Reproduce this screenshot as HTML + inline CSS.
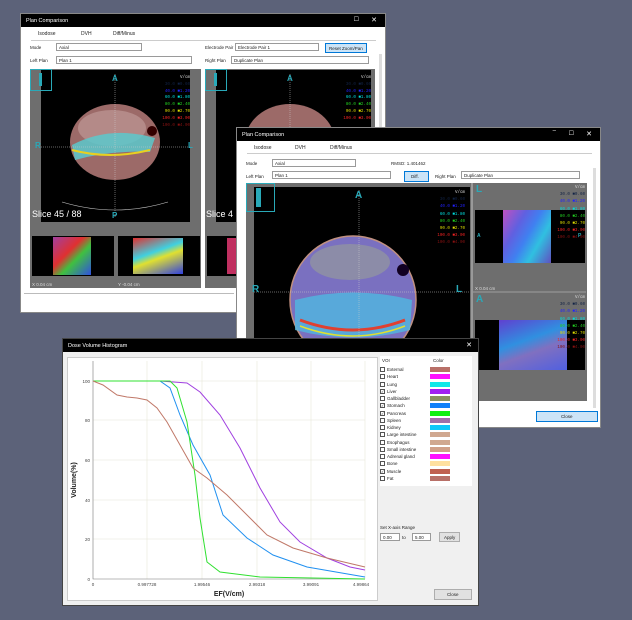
<!DOCTYPE html>
<html><head><meta charset="utf-8"><style>
*{margin:0;padding:0;box-sizing:border-box}
body{width:632px;height:620px;background:#5c6279;position:relative;overflow:hidden;font-family:"Liberation Sans",sans-serif;font-size:5px;color:#222}
.a{position:absolute}
.win{position:absolute;background:#fff;border:1px solid #888}
.tb{position:absolute;left:0;right:0;top:0;height:13px;background:#000;color:#fff;font-size:5.5px;padding:4px 0 0 5px}
.inp{position:absolute;background:#fff;border:1px solid #9a9a9a;height:8px;font-size:4.5px;padding:1px 2px}
.gray{position:absolute;background:#6e6e6e}
.blk{position:absolute;background:#000}
.lab{position:absolute;font-size:4.5px}
.cy{color:#29a9b8;position:absolute;font-weight:bold}
</style></head><body>

<!-- Window 1 -->
<div class="win" style="left:20px;top:13px;width:366px;height:300px">
 <div class="tb">Plan Comparison<span class="a" style="right:8px;top:2px;font-size:7px">✕</span><span class="a" style="right:26px;top:2px;font-size:6px">☐</span></div>
 <div class="lab" style="left:17px;top:17px;font-size:5px">Isodose</div>
 <div class="lab" style="left:60px;top:17px;font-size:5px">DVH</div>
 <div class="lab" style="left:92px;top:17px;font-size:5px">Diff/Minus</div>
 <div class="a" style="left:10px;top:26px;width:345px;height:1px;background:#ccc"></div>
 <div class="lab" style="left:9px;top:31px">Mode</div><div class="inp" style="left:35px;top:29px;width:86px">Axial</div>
 <div class="lab" style="left:9px;top:44px">Left Plan</div><div class="inp" style="left:35px;top:42px;width:136px">Plan 1</div>
 <div class="lab" style="left:184px;top:31px">Electrode Pair</div><div class="inp" style="left:214px;top:29px;width:84px">Electrode Pair 1</div>
 <div class="a" style="left:304px;top:29px;width:42px;height:10px;background:#cce4f7;border:1px solid #0078d7;font-size:4.5px;padding:2px 3px">Reset Zoom/Pan</div>
 <div class="lab" style="left:184px;top:44px">Right Plan</div><div class="inp" style="left:210px;top:42px;width:138px">Duplicate Plan</div>
 <div class="a" style="left:358px;top:40px;width:3px;height:250px;background:#ddd"></div>
</div>
<div class="gray" style="left:30px;top:69px;width:171px;height:219px"></div>
<div class="blk" style="left:41px;top:70px;width:149px;height:152px"></div>
<div class="gray" style="left:205px;top:69px;width:170px;height:219px"></div>
<div class="blk" style="left:216px;top:70px;width:155px;height:152px"></div>
<svg class="a" style="left:0;top:0" width="632" height="620">
 <g>
 <ellipse cx="115" cy="142" rx="45" ry="38" fill="#9c6a68"/>
 <ellipse cx="112" cy="128" rx="34" ry="18" fill="#b48a88"/>
 <path d="M72 145 Q110 125 155 138 L150 152 Q110 150 75 160Z" fill="#5cc8cc" opacity=".85"/>
 <path d="M72 150 Q110 160 150 150" stroke="#e8d020" stroke-width="2" fill="none"/>
 <circle cx="152" cy="131" r="5" fill="#300"/>
 <line x1="115" y1="74" x2="115" y2="218" stroke="#ccc" stroke-width=".5" stroke-dasharray="1 1"/>
 <line x1="41" y1="147" x2="190" y2="147" stroke="#ccc" stroke-width=".5" stroke-dasharray="1 1"/>
 <path d="M62 202 Q115 218 168 202" stroke="#ccc" stroke-width=".6" fill="none"/>
 <ellipse cx="290" cy="142" rx="45" ry="38" fill="#9c6a68"/>
 <line x1="290" y1="74" x2="290" y2="130" stroke="#ccc" stroke-width=".5" stroke-dasharray="1 1"/>
 </g>
</svg>
<div class="cy" style="left:112px;top:74px;font-size:8px">A</div>
<div class="cy" style="left:287px;top:74px;font-size:8px">A</div>
<div class="cy" style="left:35px;top:141px;font-size:8px">R</div>
<div class="cy" style="left:188px;top:141px;font-size:8px">L</div>
<div class="cy" style="left:112px;top:211px;font-size:8px">P</div>
<div class="a" style="left:30px;top:69px;width:22px;height:22px;border:1px solid #29a9b8"></div>
<div class="a" style="left:39px;top:73px;width:3px;height:13px;background:#29a9b8"></div>
<div class="a" style="left:205px;top:69px;width:22px;height:22px;border:1px solid #29a9b8"></div>
<div class="a" style="left:214px;top:73px;width:3px;height:13px;background:#29a9b8"></div>
<div class="a" style="left:32px;top:209px;color:#fff;font-size:9px">Slice 45 / 88</div>
<div class="a" style="left:206px;top:209px;color:#fff;font-size:9px">Slice 4</div>
<div class="a" style="left:155px;top:75px;font-family:'Liberation Mono';font-size:4.2px;line-height:6.8px;text-align:right;width:35px">
<span style="color:#ddd">V/cm</span><br><span style="color:#124">30.0 ■0.60</span><br><span style="color:#22f">40.0 ■1.20</span><br><span style="color:#0dd">60.0 ■1.80</span><br><span style="color:#2c2">80.0 ■2.40</span><br><span style="color:#dd0">90.0 ■2.70</span><br><span style="color:#e22">100.0 ■3.00</span><br><span style="color:#811">100.0 ■4.00</span></div>
<div class="a" style="left:336px;top:75px;font-family:'Liberation Mono';font-size:4.2px;line-height:6.8px;text-align:right;width:35px">
<span style="color:#ddd">V/cm</span><br><span style="color:#124">30.0 ■0.60</span><br><span style="color:#22f">40.0 ■1.20</span><br><span style="color:#0dd">60.0 ■1.80</span><br><span style="color:#2c2">80.0 ■2.40</span><br><span style="color:#dd0">90.0 ■2.70</span><br><span style="color:#e22">100.0 ■3.00</span></div>
<!-- thumbnails win1 -->
<div class="blk" style="left:32px;top:236px;width:82px;height:40px"></div>
<div class="a" style="left:53px;top:237px;width:38px;height:38px;background:linear-gradient(135deg,#a040a0,#e03030 40%,#40c040 60%,#3050e0)"></div>
<div class="blk" style="left:118px;top:236px;width:82px;height:40px"></div>
<div class="a" style="left:133px;top:238px;width:50px;height:36px;background:linear-gradient(160deg,#e03030,#40d0e0 40%,#e0e030 55%,#3040e0)"></div>
<div class="blk" style="left:207px;top:236px;width:30px;height:40px"></div>
<div class="a" style="left:227px;top:238px;width:10px;height:36px;background:#c03060"></div>
<div class="a" style="left:32px;top:282px;color:#ddd;font-size:4.5px">X 0.04 cm</div>
<div class="a" style="left:118px;top:282px;color:#ddd;font-size:4.5px">Y -0.04 cm</div>
<div class="a" style="left:24px;top:293px;width:210px;height:1px;background:#bbb"></div>

<!-- Window 2 -->
<div class="win" style="left:236px;top:127px;width:365px;height:301px">
 <div class="tb">Plan Comparison<span class="a" style="right:8px;top:2px;font-size:7px">✕</span><span class="a" style="right:26px;top:2px;font-size:6px">☐</span><span class="a" style="right:44px;top:0;font-size:6px">–</span></div>
 <div class="lab" style="left:17px;top:17px;font-size:5px">Isodose</div>
 <div class="lab" style="left:58px;top:17px;font-size:5px">DVH</div>
 <div class="lab" style="left:93px;top:17px;font-size:5px">Diff/Minus</div>
 <div class="a" style="left:10px;top:25px;width:345px;height:1px;background:#ccc"></div>
 <div class="lab" style="left:9px;top:33px">Mode</div><div class="inp" style="left:35px;top:31px;width:84px">Axial</div>
 <div class="lab" style="left:9px;top:46px">Left Plan</div><div class="inp" style="left:35px;top:43px;width:119px">Plan 1</div>
 <div class="lab" style="left:154px;top:33px">RMSD: 1.401462</div>
 <div class="a" style="left:167px;top:43px;width:25px;height:11px;background:#cce4f7;border:1px solid #0078d7;font-size:4.5px;padding:2px 6px">Diff.</div>
 <div class="lab" style="left:198px;top:46px">Right Plan</div><div class="inp" style="left:224px;top:43px;width:119px">Duplicate Plan</div>
 <div class="a" style="left:299px;top:283px;width:62px;height:11px;background:#cce4f7;border:1px solid #0078d7;font-size:4.5px;padding:2px 24px">Close</div>
 <div class="a" style="left:356px;top:40px;width:3px;height:240px;background:#ddd"></div>
</div>
<div class="gray" style="left:246px;top:183px;width:341px;height:218px"></div>
<div class="blk" style="left:254px;top:187px;width:216px;height:214px"></div>
<div class="gray" style="left:471px;top:183px;width:2px;height:218px;background:#999"></div>
<div class="blk" style="left:475px;top:210px;width:110px;height:53px"></div>
<div class="a" style="left:503px;top:210px;width:48px;height:53px;background:linear-gradient(120deg,#c050c0,#6060e0 30%,#4080f0 50%,#30c0e0 70%,#6050c0)"></div>
<div class="blk" style="left:475px;top:320px;width:110px;height:50px"></div>
<div class="a" style="left:499px;top:320px;width:68px;height:50px;background:linear-gradient(160deg,#6040d0,#3090e0 40%,#8070c0 60%,#5060e0)"></div>
<svg class="a" style="left:0;top:0" width="632" height="620">
 <ellipse cx="353" cy="300" rx="63" ry="64" fill="#7a70c0" stroke="#c09080" stroke-width="1.5"/>
 <ellipse cx="350" cy="262" rx="40" ry="18" fill="#8c8ca8"/>
 <path d="M295 300 Q353 285 412 300 L410 330 Q353 345 295 330Z" fill="#50b8e0" opacity=".8"/>
 <path d="M300 320 Q353 340 405 320" stroke="#e04030" stroke-width="3" fill="none"/>
 <path d="M300 326 Q353 346 405 326" stroke="#e0e030" stroke-width="1.5" fill="none"/>
 <circle cx="403" cy="270" r="6" fill="#102"/>
 <line x1="359" y1="190" x2="359" y2="400" stroke="#ccc" stroke-width=".5" stroke-dasharray="1 1"/>
 <line x1="254" y1="292" x2="470" y2="292" stroke="#ccc" stroke-width=".5" stroke-dasharray="1 1"/>
 <line x1="473" y1="292" x2="586" y2="292" stroke="#ccc" stroke-width=".6"/>
</svg>
<div class="cy" style="left:355px;top:190px;font-size:10px">A</div>
<div class="cy" style="left:252px;top:284px;font-size:10px">R</div>
<div class="cy" style="left:456px;top:284px;font-size:10px">L</div>
<div class="a" style="left:246px;top:183px;width:29px;height:29px;border:1px solid #29a9b8"></div>
<div class="a" style="left:256px;top:188px;width:5px;height:19px;background:#29a9b8"></div>
<div class="cy" style="left:476px;top:184px;font-size:10px">L</div>
<div class="cy" style="left:476px;top:294px;font-size:10px">A</div>
<div class="cy" style="left:477px;top:233px;font-size:5px">A</div>
<div class="cy" style="left:578px;top:233px;font-size:5px">P</div>
<div class="a" style="left:475px;top:286px;color:#ddd;font-size:4.5px">X 0.04 cm</div>
<div class="a" style="left:425px;top:190px;font-family:'Liberation Mono';font-size:4.2px;line-height:7.2px;text-align:right;width:40px">
<span style="color:#ddd">V/cm</span><br><span style="color:#124">30.0 ■0.60</span><br><span style="color:#22f">40.0 ■1.20</span><br><span style="color:#0dd">60.0 ■1.80</span><br><span style="color:#2c2">80.0 ■2.40</span><br><span style="color:#dd0">90.0 ■2.70</span><br><span style="color:#e22">100.0 ■3.00</span><br><span style="color:#811">100.0 ■4.00</span></div>
<div class="a" style="left:545px;top:185px;font-family:'Liberation Mono';font-size:4.2px;line-height:7.2px;text-align:right;width:40px">
<span style="color:#ddd">V/cm</span><br><span style="color:#124">30.0 ■0.60</span><br><span style="color:#22f">40.0 ■1.20</span><br><span style="color:#0dd">60.0 ■1.80</span><br><span style="color:#2c2">80.0 ■2.40</span><br><span style="color:#dd0">90.0 ■2.70</span><br><span style="color:#e22">100.0 ■3.00</span><br><span style="color:#811">100.0 ■4.00</span></div>
<div class="a" style="left:545px;top:295px;font-family:'Liberation Mono';font-size:4.2px;line-height:7.2px;text-align:right;width:40px">
<span style="color:#ddd">V/cm</span><br><span style="color:#124">30.0 ■0.60</span><br><span style="color:#22f">40.0 ■1.20</span><br><span style="color:#0dd">60.0 ■1.80</span><br><span style="color:#2c2">80.0 ■2.40</span><br><span style="color:#dd0">90.0 ■2.70</span><br><span style="color:#e22">100.0 ■3.00</span><br><span style="color:#811">100.0 ■4.00</span></div>

<!-- DVH window -->
<div class="win" style="left:62px;top:338px;width:417px;height:268px;background:#f0f0f0;border-color:#444">
 <div class="tb">Dose Volume Histogram<span class="a" style="right:6px;top:2px;font-size:7px">✕</span></div>
</div>
<div class="a" style="left:67px;top:357px;width:311px;height:244px;background:#fff;border:1px solid #ccc"></div>
<svg class="a" style="left:0;top:0" width="632" height="620" font-family="Liberation Sans">
 <g stroke="#e6e6d8" stroke-width=".6">
  <line x1="93" y1="381" x2="365" y2="381"/><line x1="93" y1="420" x2="365" y2="420"/><line x1="93" y1="460" x2="365" y2="460"/><line x1="93" y1="500" x2="365" y2="500"/><line x1="93" y1="539" x2="365" y2="539"/>
  <line x1="147" y1="361" x2="147" y2="579"/><line x1="202" y1="361" x2="202" y2="579"/><line x1="257" y1="361" x2="257" y2="579"/><line x1="311" y1="361" x2="311" y2="579"/><line x1="365" y1="361" x2="365" y2="579"/>
 </g>
 <path d="M93 361 V579 H365" stroke="#777" stroke-width=".6" fill="none"/>
 <g font-size="4.5" fill="#444" text-anchor="end">
  <text x="90" y="383">100</text><text x="90" y="422">80</text><text x="90" y="462">60</text><text x="90" y="502">40</text><text x="90" y="541">20</text><text x="90" y="581">0</text>
 </g>
 <g font-size="4.5" fill="#444" text-anchor="middle">
  <text x="93" y="586">0</text><text x="147" y="586">0.997728</text><text x="202" y="586">1.99546</text><text x="257" y="586">2.99318</text><text x="311" y="586">3.99091</text><text x="361" y="586">4.99864</text>
 </g>
 <text x="229" y="596" font-size="7" font-weight="bold" text-anchor="middle" fill="#222">EF(V/cm)</text>
 <text transform="translate(76 480) rotate(-90)" font-size="7" font-weight="bold" text-anchor="middle" fill="#222">Volume(%)</text>
 <g fill="none" stroke-width="1">
 <polyline stroke="#a040e0" points="93,381 160,381 187,383 200,392 220,415 240,448 260,488 280,522 300,542 327,558 350,567 365,570"/>
 <polyline stroke="#2090f0" points="93,381 160,381 170,388 180,415 193,445 210,475 223,515 247,538 273,555 307,567 365,577"/>
 <polyline stroke="#30e030" points="93,381 170,381 177,388 187,422 195,475 200,518 207,562 220,572 260,577 365,579"/>
 <polyline stroke="#c07868" points="93,381 103,385 117,395 127,397 137,398 147,400 157,408 167,422 180,445 193,468 207,478 227,495 247,515 267,535 293,548 327,558 365,567"/>
 </g>
</svg>
<!-- table -->
<div class="a" style="left:380px;top:356px;width:92px;height:130px;background:#fff"></div>
<div class="a" style="left:382px;top:358px;font-size:4.5px">VOI</div>
<div class="a" style="left:433px;top:358px;font-size:4.5px">Color</div>
<div class="a" style="left:380px;top:366px;font-size:4.5px;line-height:7.25px;width:92px">
<div style="position:relative;height:7.25px"><span style="display:inline-block;width:5px;height:5px;border:.5px solid #555;margin:1px 2px 0 0;vertical-align:top"></span>External<i style="position:absolute;left:50px;top:1px;width:20px;height:5px;background:#b87068"></i></div>
<div style="position:relative;height:7.25px"><span style="display:inline-block;width:5px;height:5px;border:.5px solid #555;margin:1px 2px 0 0;vertical-align:top"></span>Heart<i style="position:absolute;left:50px;top:1px;width:20px;height:5px;background:#ff10ff"></i></div>
<div style="position:relative;height:7.25px"><span style="display:inline-block;width:5px;height:5px;border:.5px solid #555;margin:1px 2px 0 0;vertical-align:top"></span>Lung<i style="position:absolute;left:50px;top:1px;width:20px;height:5px;background:#10e8e8"></i></div>
<div style="position:relative;height:7.25px"><span style="display:inline-block;width:5px;height:5px;border:.5px solid #555;margin:1px 2px 0 0;vertical-align:top;font-size:4px;line-height:4px">✓</span>Liver<i style="position:absolute;left:50px;top:1px;width:20px;height:5px;background:#a020f0"></i></div>
<div style="position:relative;height:7.25px"><span style="display:inline-block;width:5px;height:5px;border:.5px solid #555;margin:1px 2px 0 0;vertical-align:top"></span>Gallbladder<i style="position:absolute;left:50px;top:1px;width:20px;height:5px;background:#889060"></i></div>
<div style="position:relative;height:7.25px"><span style="display:inline-block;width:5px;height:5px;border:.5px solid #555;margin:1px 2px 0 0;vertical-align:top;font-size:4px;line-height:4px">✓</span>Stomach<i style="position:absolute;left:50px;top:1px;width:20px;height:5px;background:#1080f8"></i></div>
<div style="position:relative;height:7.25px"><span style="display:inline-block;width:5px;height:5px;border:.5px solid #555;margin:1px 2px 0 0;vertical-align:top;font-size:4px;line-height:4px">✓</span>Pancreas<i style="position:absolute;left:50px;top:1px;width:20px;height:5px;background:#10f010"></i></div>
<div style="position:relative;height:7.25px"><span style="display:inline-block;width:5px;height:5px;border:.5px solid #555;margin:1px 2px 0 0;vertical-align:top"></span>Spleen<i style="position:absolute;left:50px;top:1px;width:20px;height:5px;background:#a070a8"></i></div>
<div style="position:relative;height:7.25px"><span style="display:inline-block;width:5px;height:5px;border:.5px solid #555;margin:1px 2px 0 0;vertical-align:top"></span>Kidney<i style="position:absolute;left:50px;top:1px;width:20px;height:5px;background:#10c8f8"></i></div>
<div style="position:relative;height:7.25px"><span style="display:inline-block;width:5px;height:5px;border:.5px solid #555;margin:1px 2px 0 0;vertical-align:top"></span>Large intestine<i style="position:absolute;left:50px;top:1px;width:20px;height:5px;background:#d0a890"></i></div>
<div style="position:relative;height:7.25px"><span style="display:inline-block;width:5px;height:5px;border:.5px solid #555;margin:1px 2px 0 0;vertical-align:top"></span>Esophagus<i style="position:absolute;left:50px;top:1px;width:20px;height:5px;background:#d0a890"></i></div>
<div style="position:relative;height:7.25px"><span style="display:inline-block;width:5px;height:5px;border:.5px solid #555;margin:1px 2px 0 0;vertical-align:top"></span>Small intestine<i style="position:absolute;left:50px;top:1px;width:20px;height:5px;background:#d0a088"></i></div>
<div style="position:relative;height:7.25px"><span style="display:inline-block;width:5px;height:5px;border:.5px solid #555;margin:1px 2px 0 0;vertical-align:top"></span>Adrenal gland<i style="position:absolute;left:50px;top:1px;width:20px;height:5px;background:#ff10ff"></i></div>
<div style="position:relative;height:7.25px"><span style="display:inline-block;width:5px;height:5px;border:.5px solid #555;margin:1px 2px 0 0;vertical-align:top"></span>Bone<i style="position:absolute;left:50px;top:1px;width:20px;height:5px;background:#ffe0a0"></i></div>
<div style="position:relative;height:7.25px"><span style="display:inline-block;width:5px;height:5px;border:.5px solid #555;margin:1px 2px 0 0;vertical-align:top;font-size:4px;line-height:4px">✓</span>Muscle<i style="position:absolute;left:50px;top:1px;width:20px;height:5px;background:#c06050"></i></div>
<div style="position:relative;height:7.25px"><span style="display:inline-block;width:5px;height:5px;border:.5px solid #555;margin:1px 2px 0 0;vertical-align:top"></span>Fat<i style="position:absolute;left:50px;top:1px;width:20px;height:5px;background:#b87068"></i></div>
</div>
<div class="a" style="left:380px;top:525px;font-size:4.5px">Set X-axis Range</div>
<div class="inp" style="left:380px;top:533px;width:20px">0.00</div>
<div class="a" style="left:402px;top:535px;font-size:4.5px">to</div>
<div class="inp" style="left:412px;top:533px;width:19px">5.00</div>
<div class="a" style="left:439px;top:532px;width:21px;height:10px;background:#e1e1e1;border:1px solid #adadad;font-size:4.5px;padding:2px 4px">Apply</div>
<div class="a" style="left:434px;top:589px;width:38px;height:11px;background:#e1e1e1;border:1px solid #adadad;font-size:4.5px;padding:2px 12px">Close</div>
</body></html>
